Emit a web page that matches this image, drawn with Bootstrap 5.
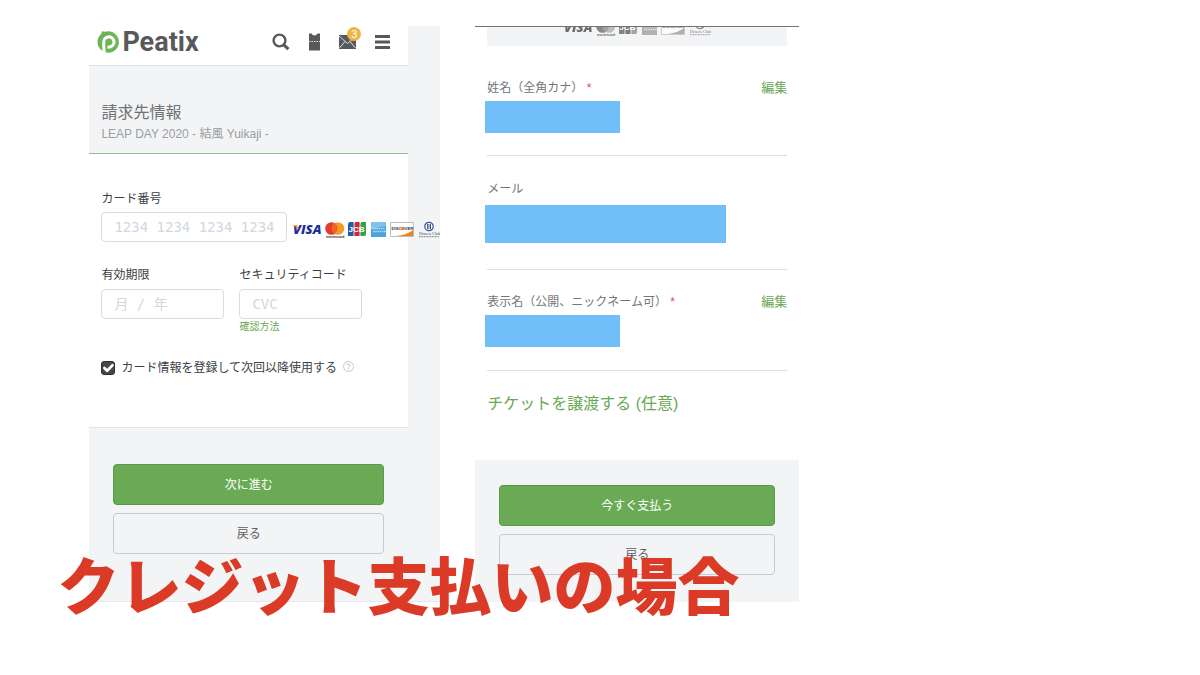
<!DOCTYPE html>
<html lang="ja">
<head>
<meta charset="utf-8">
<meta name="viewport" content="width=device-width, initial-scale=1">
<title>Peatix - クレジット支払いの場合</title>
<link href="https://cdn.jsdelivr.net/npm/bootstrap@5.3.0/dist/css/bootstrap.min.css" rel="stylesheet">
<style>
body{font-family:"Liberation Sans","Noto Sans CJK JP",sans-serif;font-size:12px;line-height:20px;color:#3c3f42;background:#fff}
.slide{display:grid;grid-template-columns:351fr 324fr;column-gap:35px;align-content:start;padding:26px 33.4% 0 7.45%}
.phone{min-width:0}
.phone-left{background:#f3f4f6;border-bottom:1px solid #e6e8eb}
.screen{margin-right:32px}
.topbar{height:40px;border-bottom:1px solid #dcdfe3;padding:0 18px 7px 8px}
.brand{font:700 27px/32px Roboto,sans-serif;color:#58595b;gap:2px}
.tools{gap:19px}
.tools a{color:#58595b}
.count{top:-8px;left:8px;width:14px;height:14px;border-radius:50%;background:#ecb646;color:#fff;font-size:11px;line-height:14px}
.heading{padding:35px 12px 10px;border-bottom:1px solid #8fc18a}
.heading h1{font-size:16px;line-height:24px;color:#6f7173}
.heading p{line-height:18px;color:#9b9da0}
.payform{padding:35px 12px 49px;border-bottom:1px solid #dfe2e6}
.payform label{color:#3c3f42}
.entry{height:30px;padding:0 12px;border:1px solid #d9dde1;border-radius:4px;font-family:"DejaVu Sans Mono","Noto Sans CJK JP",monospace;font-size:14px;line-height:28px}
.entry::placeholder{color:#d0d8e1}
.number-box{flex:0 0 186px}
.half{flex:0 0 123px}
.under-label{margin-bottom:3px}
.card-line{gap:6px}
.card-line .brands{margin-top:5px}
.gap-fields{gap:15px}
.row-space{margin-top:23px}
.save-line{gap:6px;margin-top:23px}
.green{color:#69a954;text-decoration:none}
.small-link{font-size:10px;line-height:16px}
.tick{width:14px;height:14px;margin:0;border:1px solid #333;border-radius:4px}
.tick:checked{background-color:#46484a;border-color:#2e3032;background-size:150%}
.brands{width:147px;height:18px;flex:none}
.actions{gap:8px;padding:36px 24px 46px}
.phone-left .actions{margin-right:32px}
.actions .btn{height:41px;font-size:12px;line-height:20px;border-radius:4px;padding:0}
.btn-go{background:#6aaa55;border-color:#58994a;color:#fff}
.btn-go:hover{background:#5c9c48;color:#fff}
.btn-back{background:#f3f4f6;border-color:#c7cad3;color:#5b5d60}
.phone-right{border-top:1px solid #717375}
.inset{padding:0 12px}
.strip{height:19px;background:#f3f4f6}
.strip-clip{height:10px;overflow:hidden;filter:grayscale(1);opacity:.7}
.field{color:#747679;border-bottom:1px solid #dcddde}
.field-a{padding:32px 0 22px}
.field-b{padding:23px 0 26px}
.field-c{padding:22px 0 23px}
.field .green{font-size:13px}
.req{color:#d9534f}
.mask{background:#71bff9;height:32px;margin:3px 0 0 -2px;width:45%}
.mask-wide{width:80.4%;height:38px;margin-top:6px}
.transfer{font-size:16px;line-height:24px;padding:21px 0 44px}
.phone-right .actions{background:#f3f4f6;padding:25px 24px 27px}
.caption-text{top:551px;left:4.8%;font:900 62px/64px "Noto Sans CJK JP",sans-serif;color:#db3a26}
</style>
</head>
<body>
<svg class="d-none" aria-hidden="true">
<symbol id="cards" viewBox="0 0 147 18">
<text x="0" y="13" font-family="Open Sans,sans-serif" font-size="13" font-weight="800" font-style="italic" fill="#1a2f9c">VISA</text>
<path d="M0 4h4l1.500 4z" fill="#f0a020"/>
<circle cx="38.500" cy="7.500" r="6.300" fill="#e23a2c"/><circle cx="45" cy="7.500" r="6.300" fill="#f59b2c"/>
<path d="M41.700 2.200a6.300 6.300 0 0 1 0 10.600 6.300 6.300 0 0 1 0-10.600z" fill="#ef6426"/>
<text x="33" y="16.500" font-family="Liberation Sans,sans-serif" font-size="3.400" font-weight="700" fill="#333">mastercard</text>
<path d="M57 1h4v13q0 1-1 1h-5V4q0-3 2-3z" fill="#1f5cae"/><path d="M63 1h4v13q0 1-1 1h-5V4q0-3 2-3z" fill="#d3263c"/><path d="M69 1h4v12q0 2-2 2h-4V4q0-3 2-3z" fill="#35a04a"/><path d="M61 1v14M67 1v14" stroke="#fff" stroke-width=".8"/>
<text x="55.500" y="11" font-family="Liberation Sans,sans-serif" font-size="8" font-weight="700" fill="#fff">JCB</text>
<path d="M78 1h15v15H78z" fill="#4aa5dc"/><path d="M78 1h15v4L78 8z" fill="#7cc4ea"/>
<path d="M79 7.500h13M80 10.500h13" stroke="#b9e0f5" stroke-width="1.500" stroke-dasharray="1.500 .7"/>
<path d="M97.500 1.500h23v14h-23z" fill="#fff" stroke="#b9bcc0"/><path d="M120 9v6h-17q11-1 17-6z" fill="#f28220"/>
<text x="98.500" y="9" font-family="Liberation Sans,sans-serif" font-size="4.200" font-weight="700" fill="#333">DISCOVER</text><circle cx="109.700" cy="7.500" r="1.700" fill="#f28220"/>
<circle cx="136" cy="5.500" r="4.200" fill="#fff" stroke="#31558f" stroke-width="1.200"/><path d="M134.800 3v5M137.300 3v5" stroke="#31558f" stroke-width="1.400"/>
<text x="126" y="14" font-family="Liberation Serif,serif" font-size="4.400" fill="#444">Diners Club</text>
<path d="M126 15.700h20" stroke="#888" stroke-width="1.200" stroke-dasharray="1 .6"/>
</symbol>
</svg>
<main class="slide position-relative min-vh-100">
<section class="phone phone-left overflow-hidden">
<div class="screen">
<header class="topbar bg-white d-flex align-items-center justify-content-between">
<a href="#" class="brand d-flex align-items-center text-decoration-none"><svg width="23" height="24" viewBox="0 0 23 24" aria-hidden="true"><path d="M5 1.200l3.200.5A10.700 10.700 0 1 1 4.300 3.800z" fill="#6db658"/><path d="M7.700 24.500c-1-4-1.200-8-.9-12a5.100 5.100 0 1 1 6.700 4.300q-1.500.5-3 0" fill="none" stroke="#fff" stroke-width="3"/></svg>Peatix</a>
<nav class="tools d-flex align-items-center">
<a href="#" class="d-flex" aria-label="検索"><svg width="18" height="18" viewBox="0 0 18 18" fill="none" stroke="currentColor"><circle cx="7.500" cy="7.500" r="5.900" stroke-width="2.400"/><path d="M11.800 11.800l4.600 4.400" stroke-width="3.200"/></svg></a>
<a href="#" class="d-flex" aria-label="チケット"><svg width="11" height="18" viewBox="0 0 11 18"><path d="M0 .5h2.500q1 2 3 2t3-2H11v17H0z" fill="currentColor"/><path d="M0 8.500h11" stroke="#fff" stroke-width=".8" stroke-dasharray="1.500 1"/></svg></a>
<a href="#" class="d-flex position-relative text-decoration-none" aria-label="メッセージ"><svg width="17" height="14" viewBox="0 0 17 14"><path d="M0 0h17v14H0z" fill="currentColor"/><path d="M0 1l8.500 7.500L17 1M.5 13L6 6.500M16.500 13L11 6.500" fill="none" stroke="#fff" stroke-width=".8"/></svg><span class="count position-absolute text-center">3</span></a>
<a href="#" class="d-flex" aria-label="メニュー"><svg width="15" height="14" viewBox="0 0 15 14"><path d="M0 1.500h15M0 7h15M0 12.500h15" stroke="currentColor" stroke-width="2.800"/></svg></a>
</nav>
</header>
<div class="heading"><h1 class="m-0 fw-normal">請求先情報</h1><p class="m-0">LEAP DAY 2020 - 結風 Yuikaji -</p></div>
<form class="payform bg-white">
<label for="num" class="d-block under-label">カード番号</label>
<div class="card-line d-flex align-items-center">
<div class="number-box"><input id="num" class="form-control entry" placeholder="1234 1234 1234 1234"></div>
<svg class="brands" role="img" aria-label="VISA Mastercard JCB American Express Discover Diners Club"><use href="#cards"/></svg>
</div>
<div class="d-flex gap-fields row-space">
<div class="half"><label for="exp" class="d-block mb-1">有効期限</label><input id="exp" class="form-control entry" placeholder="月 / 年"></div>
<div class="half"><label for="cvc" class="d-block mb-1">セキュリティコード</label><input id="cvc" class="form-control entry" placeholder="CVC"><a href="#" class="green small-link d-block">確認方法</a></div>
</div>
<div class="save-line d-flex align-items-center">
<input id="save" type="checkbox" class="form-check-input tick" checked><label for="save" class="text-nowrap">カード情報を登録して次回以降使用する</label>
<a href="#" class="d-flex mb-1" aria-label="ヘルプ"><svg width="11" height="11" viewBox="0 0 11 11" fill="none" stroke="#babdc1"><circle cx="5.500" cy="5.500" r="5" stroke-width=".8"/><path d="M3.900 4.300q.1-1.500 1.600-1.500t1.600 1.300q0 .8-.8 1.200t-.8 1.200M5.500 7.500v1"/></svg></a>
</div>
</form>
</div>
<div class="actions d-grid"><button type="button" class="btn btn-go">次に進む</button><button type="button" class="btn btn-back">戻る</button></div>
</section>
<section class="phone phone-right">
<div class="inset">
<div class="strip"><div class="strip-clip d-flex justify-content-center align-items-end"><svg class="brands" aria-hidden="true"><use href="#cards"/></svg></div></div>
<div class="field field-a"><div class="d-flex justify-content-between"><span>姓名（全角カナ） <span class="req">*</span></span><a href="#" class="green">編集</a></div><div class="mask"></div></div>
<div class="field field-b"><div>メール</div><div class="mask mask-wide"></div></div>
<div class="field field-c"><div class="d-flex justify-content-between"><span>表示名（公開、ニックネーム可） <span class="req">*</span></span><a href="#" class="green">編集</a></div><div class="mask"></div></div>
<a href="#" class="green transfer d-block">チケットを譲渡する (任意)</a>
</div>
<div class="actions d-grid"><button type="button" class="btn btn-go">今すぐ支払う</button><button type="button" class="btn btn-back">戻る</button></div>
</section>
<h2 class="caption-text position-absolute text-nowrap m-0">クレジット支払いの場合</h2>
</main>
<script src="https://cdn.jsdelivr.net/npm/bootstrap@5.3.0/dist/js/bootstrap.bundle.min.js"></script>
</body>
</html>
